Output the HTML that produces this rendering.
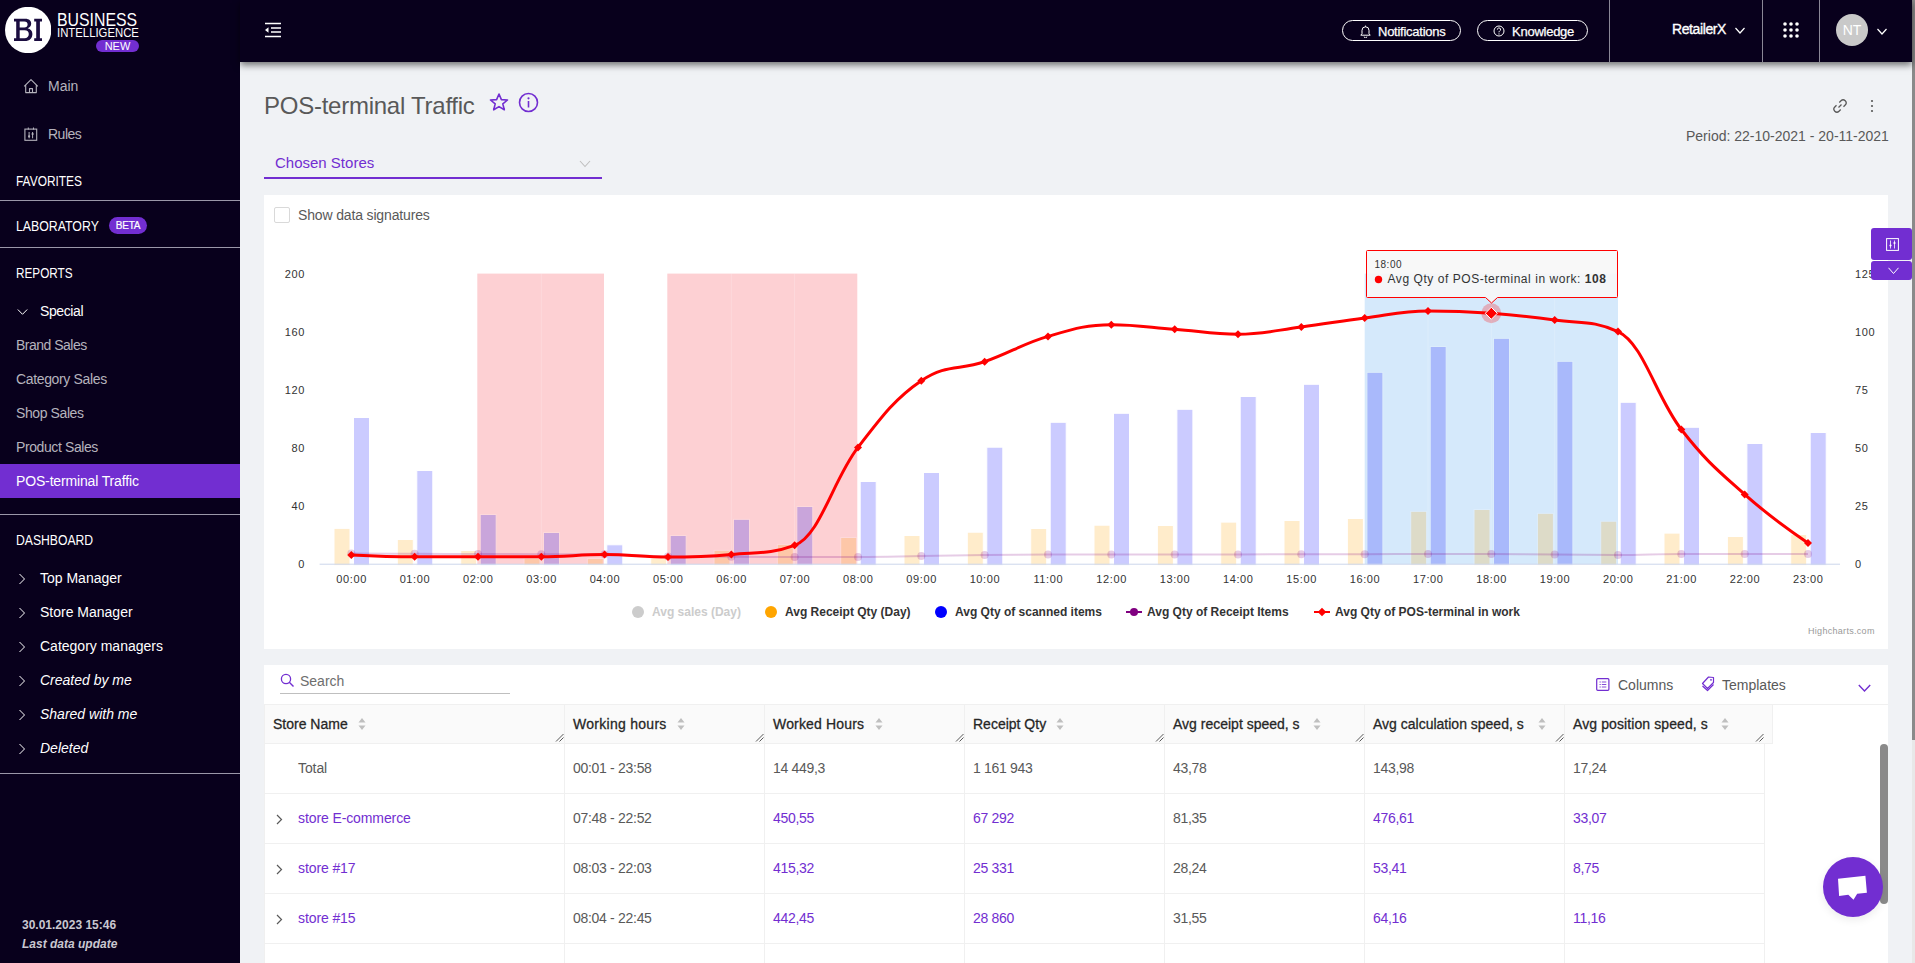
<!DOCTYPE html>
<html><head><meta charset="utf-8">
<style>
*{box-sizing:border-box;margin:0;padding:0}
html,body{width:1915px;height:963px;overflow:hidden;background:#f0f2f5;font-family:"Liberation Sans",sans-serif;color:#595959}
.abs{position:absolute}
#side{position:absolute;left:0;top:0;width:240px;height:963px;background:#08001c;color:#fff}
#hdr{position:absolute;left:240px;top:0;width:1672px;height:62px;background:#08001c;box-shadow:0 3px 7px rgba(0,0,0,0.55);z-index:5}
.sb{position:absolute;white-space:nowrap;font-size:14px;line-height:16px}
.sep{position:absolute;left:0;width:240px;height:1px;background:#9a97a8}
.pill{position:absolute;border:1px solid #fff;border-radius:11px;height:21px;top:20px;color:#fff;font-size:13px;line-height:19px;-webkit-text-stroke:0.25px #fff;letter-spacing:-0.25px}
.ax{font-family:"Liberation Sans",sans-serif;font-size:11px;fill:#333;letter-spacing:0.6px}
.tt1{font-family:"Liberation Sans",sans-serif;font-size:10px;fill:#333;letter-spacing:0.5px}
.tt2{font-family:"Liberation Sans",sans-serif;font-size:12px;fill:#333;letter-spacing:0.55px}
.card{position:absolute;background:#fff}
.lg{position:absolute;font-size:12px;font-weight:bold;color:#333;white-space:nowrap;line-height:14px}
.th{position:absolute;top:704px;height:40px;background:#fafafa;border-top:1px solid #f0f0f0;border-right:1px solid #f0f0f0;border-bottom:1px solid #f0f0f0;font-size:14px;color:#262626;line-height:39px;padding-left:8px;white-space:nowrap;-webkit-text-stroke:0.28px #262626}
.td{position:absolute;height:50px;border-right:1px solid #f0f0f0;border-bottom:1px solid #f0f0f0;font-size:14px;line-height:48px;padding-left:8px;white-space:nowrap;color:#595959;background:#fff}
.pu{color:#722ed1}
</style></head><body>
<!-- SIDEBAR -->
<div id="side">
  <svg class="abs" style="left:5px;top:7px" width="46" height="46" viewBox="0 0 46 46"><circle cx="23.2" cy="23" r="23.2" fill="#fff"/><path fill="#1b0d40" fill-rule="evenodd" d="M9 11.7 H20 C24.6 11.7 26.2 13.9 26.2 16.6 C26.2 19 24.8 20.6 22.6 21.3 C25.4 21.9 27.4 23.9 27.4 26.9 C27.4 30.6 24.9 34.1 19.6 34.1 H9 V31.3 H11.2 V14.5 H9 Z M14.7 14.5 H19.2 C21.6 14.5 22.6 15.7 22.6 17.5 C22.6 19.4 21.4 20.5 19.2 20.5 H14.7 Z M14.7 23.2 H19.6 C22.4 23.2 23.8 24.7 23.8 27.1 C23.8 29.7 22.2 31.3 19.5 31.3 H14.7 Z M29.2 11.7 H37 V14.5 H34.9 V31.3 H37 V34.1 H29.2 V31.3 H31.2 V14.5 H29.2 Z"/></svg>
  <div class="sb" style="left:57px;top:11px;font-size:18px;line-height:18px;color:#fff;transform:scaleX(0.88);transform-origin:0 0">BUSINESS</div>
  <div class="sb" style="left:57px;top:27px;font-size:12px;line-height:13px;color:#fff;transform:scaleX(0.945);transform-origin:0 0">INTELLIGENCE</div>
  <div class="abs" style="left:96px;top:40px;width:43px;height:12px;border-radius:6px;background:#722ed1;color:#fff;font-size:11px;line-height:12px;text-align:center">NEW</div>

  <svg class="abs" style="left:23px;top:78px" width="16" height="16" viewBox="0 0 16 16"><path d="M1.2 8.3 L8 1.6 L14.8 8.3 M2.7 6.9 V14.6 H13.3 V6.9 M6.5 14.6 V10.6 H9.5 V14.6" fill="none" stroke="#b5b3bd" stroke-width="1.1" stroke-linejoin="round"/></svg>
  <div class="sb" style="left:48px;top:78px;color:#b5b3bd">Main</div>
  <svg class="abs" style="left:24px;top:127px" width="14" height="14" viewBox="0 0 14 14"><rect x="0.9" y="2.1" width="11.8" height="11.2" fill="none" stroke="#b5b3bd" stroke-width="1.1"/><path d="M4.3 0.5 V2.6 M9.5 0.5 V2.6 M5.1 5 V11.3 M8.6 5 V11.3" stroke="#b5b3bd" stroke-width="1"/><circle cx="5.1" cy="9.3" r="1.1" fill="#b5b3bd"/><circle cx="8.6" cy="7" r="1.1" fill="#b5b3bd"/></svg>
  <div class="sb" style="left:48px;top:126px;color:#b5b3bd;letter-spacing:-0.5px">Rules</div>

  <div class="sb" style="left:16px;top:173px;color:#fff;transform:scaleX(0.851);transform-origin:0 0">FAVORITES</div>
  <div class="sep" style="top:200px"></div>
  <div class="sb" style="left:16px;top:218px;color:#fff;transform:scaleX(0.88);transform-origin:0 0">LABORATORY</div>
  <div class="abs" style="left:109px;top:217px;width:38px;height:17px;border-radius:9px;background:#722ed1;color:#fff;font-size:10px;line-height:18px;text-align:center;-webkit-text-stroke:0.2px #fff;letter-spacing:-0.2px">BETA</div>
  <div class="sep" style="top:247px"></div>
  <div class="sb" style="left:16px;top:265px;color:#fff;transform:scaleX(0.84);transform-origin:0 0">REPORTS</div>
  <svg class="abs" style="left:17px;top:308px" width="11" height="8" viewBox="0 0 11 8"><path d="M0.8 1.5 L5.5 6.3 L10.2 1.5" fill="none" stroke="#fff" stroke-width="1"/></svg>
  <div class="sb" style="left:40px;top:303px;color:#fff;letter-spacing:-0.4px">Special</div>
  <div class="sb" style="left:16px;top:337px;color:#b5b3bd;letter-spacing:-0.5px">Brand Sales</div>
  <div class="sb" style="left:16px;top:371px;color:#b5b3bd;letter-spacing:-0.35px">Category Sales</div>
  <div class="sb" style="left:16px;top:405px;color:#b5b3bd;letter-spacing:-0.4px">Shop Sales</div>
  <div class="sb" style="left:16px;top:439px;color:#b5b3bd;letter-spacing:-0.4px">Product Sales</div>
  <div class="abs" style="left:0;top:464px;width:240px;height:34px;background:#722ed1"></div>
  <div class="sb" style="left:16px;top:473px;color:#fff;letter-spacing:-0.15px">POS-terminal Traffic</div>
  <div class="sep" style="top:514px"></div>
  <div class="sb" style="left:16px;top:532px;color:#fff;transform:scaleX(0.87);transform-origin:0 0">DASHBOARD</div>
  <!-- dashboard items -->
  <svg class="abs" style="left:18px;top:573px" width="8" height="12" viewBox="0 0 8 12"><path d="M1.5 1 L6.5 6 L1.5 11" fill="none" stroke="#fff" stroke-width="1"/></svg>
<div class="sb" style="left:40px;top:570px;color:#fff;">Top Manager</div>
<svg class="abs" style="left:18px;top:607px" width="8" height="12" viewBox="0 0 8 12"><path d="M1.5 1 L6.5 6 L1.5 11" fill="none" stroke="#fff" stroke-width="1"/></svg>
<div class="sb" style="left:40px;top:604px;color:#fff;">Store Manager</div>
<svg class="abs" style="left:18px;top:641px" width="8" height="12" viewBox="0 0 8 12"><path d="M1.5 1 L6.5 6 L1.5 11" fill="none" stroke="#fff" stroke-width="1"/></svg>
<div class="sb" style="left:40px;top:638px;color:#fff;">Category managers</div>
<svg class="abs" style="left:18px;top:675px" width="8" height="12" viewBox="0 0 8 12"><path d="M1.5 1 L6.5 6 L1.5 11" fill="none" stroke="#fff" stroke-width="1"/></svg>
<div class="sb" style="left:40px;top:672px;color:#fff;font-style:italic;">Created by me</div>
<svg class="abs" style="left:18px;top:709px" width="8" height="12" viewBox="0 0 8 12"><path d="M1.5 1 L6.5 6 L1.5 11" fill="none" stroke="#fff" stroke-width="1"/></svg>
<div class="sb" style="left:40px;top:706px;color:#fff;font-style:italic;">Shared with me</div>
<svg class="abs" style="left:18px;top:743px" width="8" height="12" viewBox="0 0 8 12"><path d="M1.5 1 L6.5 6 L1.5 11" fill="none" stroke="#fff" stroke-width="1"/></svg>
<div class="sb" style="left:40px;top:740px;color:#fff;font-style:italic;">Deleted</div>
  <div class="sep" style="top:773px"></div>
  <div class="sb" style="left:22px;top:917px;font-size:12px;font-weight:bold;color:#c9c7d0">30.01.2023 15:46</div>
  <div class="sb" style="left:22px;top:936px;font-size:12px;font-weight:bold;font-style:italic;color:#c9c7d0">Last data update</div>
</div>

<!-- HEADER -->
<div id="hdr">
  <svg class="abs" style="left:25px;top:22px" width="17" height="16" viewBox="0 0 17 16"><path d="M0 1.5 H16 M6 6 H16 M6 10 H16 M0 14.5 H16" stroke="#fff" stroke-width="1.5"/><path d="M0 8 L3.5 5.2 V10.8 Z" fill="#fff"/></svg>
  <div class="pill" style="left:1102px;width:119px"><svg class="abs" style="left:16.5px;top:4px" width="11" height="13" viewBox="0 0 11 13"><path d="M0.8 10.2 H10.2 L9 8.7 V5.3 A3.5 3.5 0 0 0 2 5.3 V8.7 Z M4.2 11.6 A1.3 1.3 0 0 0 6.8 11.6 M5.5 0.6 V1.8" fill="none" stroke="#fff" stroke-width="1" stroke-linejoin="round"/></svg><span class="abs" style="left:35px;top:1px">Notifications</span></div>
  <div class="pill" style="left:1237px;width:111px"><svg class="abs" style="left:15px;top:3.5px" width="12" height="12" viewBox="0 0 12 12"><circle cx="6" cy="6" r="5" fill="none" stroke="#fff" stroke-width="1"/><path d="M4.4 4.6 A1.6 1.6 0 1 1 6.6 6 Q6 6.4 6 7.3" fill="none" stroke="#fff" stroke-width="1"/><circle cx="6" cy="8.9" r="0.6" fill="#fff"/></svg><span class="abs" style="left:34px;top:1px">Knowledge</span></div>
  <div class="abs" style="left:1369px;top:0;width:1px;height:62px;background:#8a8796"></div>
  <div class="abs" style="left:1432px;top:21px;color:#fff;font-size:14px;white-space:nowrap;-webkit-text-stroke:0.35px #fff;letter-spacing:-0.4px">RetailerX</div>
  <svg class="abs" style="left:1495px;top:27px" width="10" height="7" viewBox="0 0 10 7"><path d="M0.5 1 L5 6 L9.5 1" fill="none" stroke="#fff" stroke-width="1.2"/></svg>
  <div class="abs" style="left:1522px;top:0;width:1px;height:62px;background:#8a8796"></div>
  <svg class="abs" style="left:1543px;top:22px" width="16" height="16" viewBox="0 0 16 16"><g fill="#fff"><circle cx="2" cy="2" r="1.8"/><circle cx="8" cy="2" r="1.8"/><circle cx="14" cy="2" r="1.8"/><circle cx="2" cy="8" r="1.8"/><circle cx="8" cy="8" r="1.8"/><circle cx="14" cy="8" r="1.8"/><circle cx="2" cy="14" r="1.8"/><circle cx="8" cy="14" r="1.8"/><circle cx="14" cy="14" r="1.8"/></g></svg>
  <div class="abs" style="left:1579px;top:0;width:1px;height:62px;background:#8a8796"></div>
  <div class="abs" style="left:1596px;top:14px;width:32px;height:32px;border-radius:16px;background:#c9c9c9;color:#fff;font-size:14px;line-height:32px;text-align:center">NT</div>
  <svg class="abs" style="left:1637px;top:28px" width="10" height="7" viewBox="0 0 10 7"><path d="M0.5 1 L5 6 L9.5 1" fill="none" stroke="#fff" stroke-width="1.2"/></svg>
</div>
<!-- scrollbar -->
<div class="abs" style="left:1912px;top:0;width:3px;height:963px;background:#e8e8e8"></div>
<div class="abs" style="left:1912px;top:0;width:3px;height:740px;background:#8a8a8a"></div>

<!-- TITLE -->
<div class="abs" style="left:264px;top:92px;font-size:24px;line-height:28px;color:#595959;white-space:nowrap;letter-spacing:-0.25px">POS-terminal Traffic</div>
<svg class="abs" style="left:489px;top:93px" width="20" height="18" viewBox="0 0 20 18"><path d="M10 1 L12.4 6.6 L18.5 7 L13.8 10.9 L15.3 16.8 L10 13.6 L4.7 16.8 L6.2 10.9 L1.5 7 L7.6 6.6 Z" fill="none" stroke="#722ed1" stroke-width="1.6" stroke-linejoin="round"/></svg>
<svg class="abs" style="left:518px;top:92px" width="21" height="21" viewBox="0 0 21 21"><circle cx="10.5" cy="10.5" r="9" fill="none" stroke="#722ed1" stroke-width="1.6"/><path d="M10.5 9 V15.5" stroke="#722ed1" stroke-width="1.6"/><circle cx="10.5" cy="6.3" r="1.1" fill="#722ed1"/></svg>
<div class="abs" style="left:275px;top:154px;font-size:15px;line-height:18px;color:#722ed1;white-space:nowrap">Chosen Stores</div>
<svg class="abs" style="left:579px;top:160px" width="12" height="8" viewBox="0 0 12 8"><path d="M1 1 L6 6.5 L11 1" fill="none" stroke="#bfbfbf" stroke-width="1.1"/></svg>
<div class="abs" style="left:264px;top:177px;width:338px;height:2px;background:#722ed1"></div>
<!-- link + dots -->
<svg class="abs" style="left:1832px;top:98px" width="16" height="16" viewBox="0 0 16 16"><g fill="none" stroke="#595959" stroke-width="1.3"><path d="M6.5 9.5 L9.5 6.5"/><path d="M7.3 4.5 L9 2.8 A2.4 2.4 0 0 1 13.2 7 L11.5 8.7"/><path d="M8.7 11.5 L7 13.2 A2.4 2.4 0 0 1 2.8 9 L4.5 7.3"/></g></svg>
<svg class="abs" style="left:1869px;top:98px" width="6" height="16" viewBox="0 0 6 16"><g fill="#595959"><circle cx="3" cy="3" r="1.1"/><circle cx="3" cy="8" r="1.1"/><circle cx="3" cy="13" r="1.1"/></g></svg>
<div class="abs" style="left:1686px;top:128px;font-size:14px;line-height:16px;color:#595959;white-space:nowrap">Period: 22-10-2021 - 20-11-2021</div>

<!-- CHART CARD -->
<div class="card" style="left:264px;top:195px;width:1624px;height:454px">
  <div class="abs" style="left:10px;top:12px;width:16px;height:16px;border:1px solid #d9d9d9;border-radius:2px;background:#fff"></div>
  <div class="abs" style="left:34px;top:12px;font-size:14px;line-height:16px;color:#595959;white-space:nowrap;letter-spacing:-0.15px">Show data signatures</div>
  <svg class="chart" width="1624" height="453" viewBox="264 195 1624 453" style="position:absolute;left:0;top:0">
<rect x="477.3" y="273.6" width="126.7" height="290.6" fill="#fdd0d3"/>
<rect x="667.3" y="273.6" width="190.0" height="290.6" fill="#fdd0d3"/>
<rect x="1364.7" y="273.6" width="253.3" height="290.6" fill="#d5e9fb"/>
<rect x="540.8" y="273.6" width="1" height="290.6" fill="rgba(255,255,255,0.2)"/>
<rect x="730.8" y="273.6" width="1" height="290.6" fill="rgba(255,255,255,0.2)"/>
<rect x="794.1" y="273.6" width="1" height="290.6" fill="rgba(255,255,255,0.2)"/>
<rect x="1427.5" y="273.6" width="1" height="290.6" fill="rgba(255,255,255,0.2)"/>
<rect x="1490.8" y="273.6" width="1" height="290.6" fill="rgba(255,255,255,0.2)"/>
<rect x="1554.2" y="273.6" width="1" height="290.6" fill="rgba(255,255,255,0.2)"/>
<g opacity="0.2">
<rect x="334.0" y="528.4" width="16" height="36.8" fill="#ffa500" stroke="#fff" stroke-width="1"/>
<rect x="397.3" y="539.5" width="16" height="25.7" fill="#ffa500" stroke="#fff" stroke-width="1"/>
<rect x="460.7" y="550.5" width="16" height="14.7" fill="#ffa500" stroke="#fff" stroke-width="1"/>
<rect x="524.0" y="558.1" width="16" height="7.1" fill="#ffa500" stroke="#fff" stroke-width="1"/>
<rect x="587.3" y="558.5" width="16" height="6.7" fill="#ffa500" stroke="#fff" stroke-width="1"/>
<rect x="650.7" y="558.1" width="16" height="7.1" fill="#ffa500" stroke="#fff" stroke-width="1"/>
<rect x="714.0" y="550.3" width="16" height="14.9" fill="#ffa500" stroke="#fff" stroke-width="1"/>
<rect x="777.3" y="544.4" width="16" height="20.8" fill="#ffa500" stroke="#fff" stroke-width="1"/>
<rect x="840.7" y="537.5" width="16" height="27.7" fill="#ffa500" stroke="#fff" stroke-width="1"/>
<rect x="904.0" y="535.5" width="16" height="29.7" fill="#ffa500" stroke="#fff" stroke-width="1"/>
<rect x="967.3" y="532.2" width="16" height="33.0" fill="#ffa500" stroke="#fff" stroke-width="1"/>
<rect x="1030.7" y="528.5" width="16" height="36.7" fill="#ffa500" stroke="#fff" stroke-width="1"/>
<rect x="1094.0" y="525.2" width="16" height="40.0" fill="#ffa500" stroke="#fff" stroke-width="1"/>
<rect x="1157.4" y="525.5" width="16" height="39.7" fill="#ffa500" stroke="#fff" stroke-width="1"/>
<rect x="1220.7" y="522.1" width="16" height="43.1" fill="#ffa500" stroke="#fff" stroke-width="1"/>
<rect x="1284.0" y="520.5" width="16" height="44.7" fill="#ffa500" stroke="#fff" stroke-width="1"/>
<rect x="1347.4" y="518.5" width="16" height="46.7" fill="#ffa500" stroke="#fff" stroke-width="1"/>
<rect x="1410.7" y="511.3" width="16" height="53.9" fill="#ffa500" stroke="#fff" stroke-width="1"/>
<rect x="1474.0" y="509.5" width="16" height="55.7" fill="#ffa500" stroke="#fff" stroke-width="1"/>
<rect x="1537.4" y="513.3" width="16" height="51.9" fill="#ffa500" stroke="#fff" stroke-width="1"/>
<rect x="1600.7" y="521.2" width="16" height="44.0" fill="#ffa500" stroke="#fff" stroke-width="1"/>
<rect x="1664.0" y="533.1" width="16" height="32.1" fill="#ffa500" stroke="#fff" stroke-width="1"/>
<rect x="1727.4" y="536.5" width="16" height="28.7" fill="#ffa500" stroke="#fff" stroke-width="1"/>
<rect x="1790.7" y="534.5" width="16" height="30.7" fill="#ffa500" stroke="#fff" stroke-width="1"/>
</g><g opacity="0.2">
<rect x="353.5" y="417.5" width="16" height="147.7" fill="#0000ff" stroke="#fff" stroke-width="1"/>
<rect x="416.8" y="470.5" width="16" height="94.7" fill="#0000ff" stroke="#fff" stroke-width="1"/>
<rect x="480.2" y="514.5" width="16" height="50.7" fill="#0000ff" stroke="#fff" stroke-width="1"/>
<rect x="543.5" y="532.5" width="16" height="32.7" fill="#0000ff" stroke="#fff" stroke-width="1"/>
<rect x="606.8" y="544.8" width="16" height="20.4" fill="#0000ff" stroke="#fff" stroke-width="1"/>
<rect x="670.2" y="535.5" width="16" height="29.7" fill="#0000ff" stroke="#fff" stroke-width="1"/>
<rect x="733.5" y="519.3" width="16" height="45.9" fill="#0000ff" stroke="#fff" stroke-width="1"/>
<rect x="796.8" y="506.5" width="16" height="58.7" fill="#0000ff" stroke="#fff" stroke-width="1"/>
<rect x="860.2" y="481.5" width="16" height="83.7" fill="#0000ff" stroke="#fff" stroke-width="1"/>
<rect x="923.5" y="472.5" width="16" height="92.7" fill="#0000ff" stroke="#fff" stroke-width="1"/>
<rect x="986.8" y="447.2" width="16" height="118.0" fill="#0000ff" stroke="#fff" stroke-width="1"/>
<rect x="1050.2" y="422.3" width="16" height="142.9" fill="#0000ff" stroke="#fff" stroke-width="1"/>
<rect x="1113.5" y="413.3" width="16" height="151.9" fill="#0000ff" stroke="#fff" stroke-width="1"/>
<rect x="1176.9" y="409.3" width="16" height="155.9" fill="#0000ff" stroke="#fff" stroke-width="1"/>
<rect x="1240.2" y="396.5" width="16" height="168.7" fill="#0000ff" stroke="#fff" stroke-width="1"/>
<rect x="1303.5" y="384.3" width="16" height="180.9" fill="#0000ff" stroke="#fff" stroke-width="1"/>
<rect x="1366.9" y="372.3" width="16" height="192.9" fill="#0000ff" stroke="#fff" stroke-width="1"/>
<rect x="1430.2" y="346.5" width="16" height="218.7" fill="#0000ff" stroke="#fff" stroke-width="1"/>
<rect x="1493.5" y="338.3" width="16" height="226.9" fill="#0000ff" stroke="#fff" stroke-width="1"/>
<rect x="1556.9" y="361.3" width="16" height="203.9" fill="#0000ff" stroke="#fff" stroke-width="1"/>
<rect x="1620.2" y="402.3" width="16" height="162.9" fill="#0000ff" stroke="#fff" stroke-width="1"/>
<rect x="1683.5" y="427.3" width="16" height="137.9" fill="#0000ff" stroke="#fff" stroke-width="1"/>
<rect x="1746.9" y="443.5" width="16" height="121.7" fill="#0000ff" stroke="#fff" stroke-width="1"/>
<rect x="1810.2" y="432.5" width="16" height="132.7" fill="#0000ff" stroke="#fff" stroke-width="1"/>
</g>
<rect x="319.6" y="563.7" width="1520.4" height="1" fill="#ccd6eb"/>
<path d="M 351.30 553.40 C 351.30 553.40 389.30 553.68 414.63 553.80 C 439.97 553.92 452.64 553.92 477.97 554.00 C 503.30 554.08 515.97 554.14 541.30 554.20 C 566.64 554.26 579.31 554.20 604.64 554.30 C 629.97 554.40 642.64 556.00 667.97 556.40 C 693.31 556.80 705.97 556.70 731.31 556.80 C 756.64 556.90 769.31 556.90 794.64 556.90 C 819.98 556.90 832.64 556.90 857.98 556.90 C 883.31 556.90 895.98 556.38 921.31 556.00 C 946.65 555.62 959.31 555.28 984.65 555.00 C 1009.98 554.72 1022.65 554.60 1047.98 554.60 C 1073.32 554.60 1085.98 554.60 1111.32 554.60 C 1136.65 554.60 1149.32 554.54 1174.65 554.50 C 1199.99 554.46 1212.65 554.44 1237.99 554.40 C 1263.32 554.36 1275.99 554.34 1301.32 554.30 C 1326.66 554.26 1339.32 554.26 1364.66 554.20 C 1389.99 554.14 1402.66 554.00 1427.99 554.00 C 1453.33 554.00 1465.99 554.00 1491.33 554.00 C 1516.66 554.00 1529.33 554.30 1554.66 554.50 C 1579.99 554.70 1592.66 555.00 1618.00 555.00 C 1643.33 555.00 1656.00 554.00 1681.33 554.00 C 1706.66 554.00 1719.33 554.00 1744.67 554.00 C 1770.00 554.00 1808.00 554.00 1808.00 554.00" fill="none" stroke="rgba(128,0,128,0.2)" stroke-width="2"/>
<circle cx="351.3" cy="553.4" r="4" fill="rgba(128,0,128,0.2)"/>
<circle cx="414.6" cy="553.8" r="4" fill="rgba(128,0,128,0.2)"/>
<circle cx="478.0" cy="554.0" r="4" fill="rgba(128,0,128,0.2)"/>
<circle cx="541.3" cy="554.2" r="4" fill="rgba(128,0,128,0.2)"/>
<circle cx="604.6" cy="554.3" r="4" fill="rgba(128,0,128,0.2)"/>
<circle cx="668.0" cy="556.4" r="4" fill="rgba(128,0,128,0.2)"/>
<circle cx="731.3" cy="556.8" r="4" fill="rgba(128,0,128,0.2)"/>
<circle cx="794.6" cy="556.9" r="4" fill="rgba(128,0,128,0.2)"/>
<circle cx="858.0" cy="556.9" r="4" fill="rgba(128,0,128,0.2)"/>
<circle cx="921.3" cy="556.0" r="4" fill="rgba(128,0,128,0.2)"/>
<circle cx="984.6" cy="555.0" r="4" fill="rgba(128,0,128,0.2)"/>
<circle cx="1048.0" cy="554.6" r="4" fill="rgba(128,0,128,0.2)"/>
<circle cx="1111.3" cy="554.6" r="4" fill="rgba(128,0,128,0.2)"/>
<circle cx="1174.7" cy="554.5" r="4" fill="rgba(128,0,128,0.2)"/>
<circle cx="1238.0" cy="554.4" r="4" fill="rgba(128,0,128,0.2)"/>
<circle cx="1301.3" cy="554.3" r="4" fill="rgba(128,0,128,0.2)"/>
<circle cx="1364.7" cy="554.2" r="4" fill="rgba(128,0,128,0.2)"/>
<circle cx="1428.0" cy="554.0" r="4" fill="rgba(128,0,128,0.2)"/>
<circle cx="1491.3" cy="554.0" r="4" fill="rgba(128,0,128,0.2)"/>
<circle cx="1554.7" cy="554.5" r="4" fill="rgba(128,0,128,0.2)"/>
<circle cx="1618.0" cy="555.0" r="4" fill="rgba(128,0,128,0.2)"/>
<circle cx="1681.3" cy="554.0" r="4" fill="rgba(128,0,128,0.2)"/>
<circle cx="1744.7" cy="554.0" r="4" fill="rgba(128,0,128,0.2)"/>
<circle cx="1808.0" cy="554.0" r="4" fill="rgba(128,0,128,0.2)"/>
<path d="M 351.30 554.90 C 351.30 554.90 389.30 556.80 414.63 556.80 C 439.97 556.80 452.64 556.80 477.97 556.80 C 503.30 556.80 515.97 556.80 541.30 556.80 C 566.64 556.80 579.31 554.60 604.64 554.60 C 629.97 554.60 642.64 557.10 667.97 557.10 C 693.31 557.10 705.97 556.76 731.31 554.40 C 756.64 552.04 769.31 554.40 794.64 545.30 C 819.98 536.20 832.64 480.32 857.98 447.40 C 883.31 414.48 895.98 397.84 921.31 380.70 C 946.65 363.56 959.31 370.56 984.65 361.70 C 1009.98 352.84 1022.65 343.80 1047.98 336.40 C 1073.32 329.00 1085.98 324.70 1111.32 324.70 C 1136.65 324.70 1149.32 327.40 1174.65 329.30 C 1199.99 331.20 1212.65 334.20 1237.99 334.20 C 1263.32 334.20 1275.99 330.26 1301.32 327.00 C 1326.66 323.74 1339.32 321.10 1364.66 317.90 C 1389.99 314.70 1402.66 311.00 1427.99 311.00 C 1453.33 311.00 1465.99 311.50 1491.33 313.30 C 1516.66 315.10 1529.33 316.34 1554.66 320.00 C 1579.99 323.66 1592.66 320.00 1618.00 331.60 C 1643.33 343.20 1656.00 396.94 1681.33 429.50 C 1706.66 462.06 1719.33 471.72 1744.67 494.40 C 1770.00 517.08 1808.00 542.90 1808.00 542.90" fill="none" stroke="#ff0000" stroke-width="3" stroke-linejoin="round" stroke-linecap="round"/>
<path d="M 351.3 550.9 L 355.3 554.9 L 351.3 558.9 L 347.3 554.9 Z" fill="#ff0000"/>
<path d="M 414.6 552.8 L 418.6 556.8 L 414.6 560.8 L 410.6 556.8 Z" fill="#ff0000"/>
<path d="M 478.0 552.8 L 482.0 556.8 L 478.0 560.8 L 474.0 556.8 Z" fill="#ff0000"/>
<path d="M 541.3 552.8 L 545.3 556.8 L 541.3 560.8 L 537.3 556.8 Z" fill="#ff0000"/>
<path d="M 604.6 550.6 L 608.6 554.6 L 604.6 558.6 L 600.6 554.6 Z" fill="#ff0000"/>
<path d="M 668.0 553.1 L 672.0 557.1 L 668.0 561.1 L 664.0 557.1 Z" fill="#ff0000"/>
<path d="M 731.3 550.4 L 735.3 554.4 L 731.3 558.4 L 727.3 554.4 Z" fill="#ff0000"/>
<path d="M 794.6 541.3 L 798.6 545.3 L 794.6 549.3 L 790.6 545.3 Z" fill="#ff0000"/>
<path d="M 858.0 443.4 L 862.0 447.4 L 858.0 451.4 L 854.0 447.4 Z" fill="#ff0000"/>
<path d="M 921.3 376.7 L 925.3 380.7 L 921.3 384.7 L 917.3 380.7 Z" fill="#ff0000"/>
<path d="M 984.6 357.7 L 988.6 361.7 L 984.6 365.7 L 980.6 361.7 Z" fill="#ff0000"/>
<path d="M 1048.0 332.4 L 1052.0 336.4 L 1048.0 340.4 L 1044.0 336.4 Z" fill="#ff0000"/>
<path d="M 1111.3 320.7 L 1115.3 324.7 L 1111.3 328.7 L 1107.3 324.7 Z" fill="#ff0000"/>
<path d="M 1174.7 325.3 L 1178.7 329.3 L 1174.7 333.3 L 1170.7 329.3 Z" fill="#ff0000"/>
<path d="M 1238.0 330.2 L 1242.0 334.2 L 1238.0 338.2 L 1234.0 334.2 Z" fill="#ff0000"/>
<path d="M 1301.3 323.0 L 1305.3 327.0 L 1301.3 331.0 L 1297.3 327.0 Z" fill="#ff0000"/>
<path d="M 1364.7 313.9 L 1368.7 317.9 L 1364.7 321.9 L 1360.7 317.9 Z" fill="#ff0000"/>
<path d="M 1428.0 307.0 L 1432.0 311.0 L 1428.0 315.0 L 1424.0 311.0 Z" fill="#ff0000"/>
<path d="M 1554.7 316.0 L 1558.7 320.0 L 1554.7 324.0 L 1550.7 320.0 Z" fill="#ff0000"/>
<path d="M 1618.0 327.6 L 1622.0 331.6 L 1618.0 335.6 L 1614.0 331.6 Z" fill="#ff0000"/>
<path d="M 1681.3 425.5 L 1685.3 429.5 L 1681.3 433.5 L 1677.3 429.5 Z" fill="#ff0000"/>
<path d="M 1744.7 490.4 L 1748.7 494.4 L 1744.7 498.4 L 1740.7 494.4 Z" fill="#ff0000"/>
<path d="M 1808.0 538.9 L 1812.0 542.9 L 1808.0 546.9 L 1804.0 542.9 Z" fill="#ff0000"/>
<circle cx="1491.3" cy="313.3" r="10" fill="rgba(255,0,0,0.25)"/>
<path d="M 1491.3 307.3 L 1497.3 313.3 L 1491.3 319.3 L 1485.3 313.3 Z" fill="#ff0000" stroke="#ffffff" stroke-width="1"/>
<text x="305" y="568.2" text-anchor="end" class="ax">0</text>
<text x="305" y="510.1" text-anchor="end" class="ax">40</text>
<text x="305" y="452.0" text-anchor="end" class="ax">80</text>
<text x="305" y="393.8" text-anchor="end" class="ax">120</text>
<text x="305" y="335.7" text-anchor="end" class="ax">160</text>
<text x="305" y="277.6" text-anchor="end" class="ax">200</text>
<text x="1855" y="568.2" text-anchor="start" class="ax">0</text>
<text x="1855" y="510.1" text-anchor="start" class="ax">25</text>
<text x="1855" y="452.0" text-anchor="start" class="ax">50</text>
<text x="1855" y="393.8" text-anchor="start" class="ax">75</text>
<text x="1855" y="335.7" text-anchor="start" class="ax">100</text>
<text x="1855" y="277.6" text-anchor="start" class="ax">125</text>
<text x="351.6" y="583" text-anchor="middle" class="ax">00:00</text>
<text x="414.9" y="583" text-anchor="middle" class="ax">01:00</text>
<text x="478.3" y="583" text-anchor="middle" class="ax">02:00</text>
<text x="541.6" y="583" text-anchor="middle" class="ax">03:00</text>
<text x="604.9" y="583" text-anchor="middle" class="ax">04:00</text>
<text x="668.3" y="583" text-anchor="middle" class="ax">05:00</text>
<text x="731.6" y="583" text-anchor="middle" class="ax">06:00</text>
<text x="794.9" y="583" text-anchor="middle" class="ax">07:00</text>
<text x="858.3" y="583" text-anchor="middle" class="ax">08:00</text>
<text x="921.6" y="583" text-anchor="middle" class="ax">09:00</text>
<text x="984.9" y="583" text-anchor="middle" class="ax">10:00</text>
<text x="1048.3" y="583" text-anchor="middle" class="ax">11:00</text>
<text x="1111.6" y="583" text-anchor="middle" class="ax">12:00</text>
<text x="1175.0" y="583" text-anchor="middle" class="ax">13:00</text>
<text x="1238.3" y="583" text-anchor="middle" class="ax">14:00</text>
<text x="1301.6" y="583" text-anchor="middle" class="ax">15:00</text>
<text x="1365.0" y="583" text-anchor="middle" class="ax">16:00</text>
<text x="1428.3" y="583" text-anchor="middle" class="ax">17:00</text>
<text x="1491.6" y="583" text-anchor="middle" class="ax">18:00</text>
<text x="1555.0" y="583" text-anchor="middle" class="ax">19:00</text>
<text x="1618.3" y="583" text-anchor="middle" class="ax">20:00</text>
<text x="1681.6" y="583" text-anchor="middle" class="ax">21:00</text>
<text x="1745.0" y="583" text-anchor="middle" class="ax">22:00</text>
<text x="1808.3" y="583" text-anchor="middle" class="ax">23:00</text>
<path d="M 1367.5 250.5 L 1616.5 250.5 Q 1617.5 250.5 1617.5 251.5 L 1617.5 296.5 Q 1617.5 297.5 1616.5 297.5 L 1497.5 297.5 L 1491.5 303 L 1485.5 297.5 L 1367.5 297.5 Q 1366.5 297.5 1366.5 296.5 L 1366.5 251.5 Q 1366.5 250.5 1367.5 250.5 Z" fill="rgba(247,247,247,0.9)" stroke="#ff0000" stroke-width="1"/>
<text x="1374.5" y="268" class="tt1">18:00</text>
<circle cx="1378.5" cy="279.5" r="3.7" fill="#ff0000"/>
<text x="1387.5" y="283" class="tt2">Avg Qty of POS-terminal in work: <tspan font-weight="bold">108</tspan></text>
</svg>
  <div class="abs" style="left:368px;top:411px;width:12px;height:12px;border-radius:6px;background:#cccccc"></div>
<div class="lg" style="left:388px;top:410px;color:#cccccc">Avg sales (Day)</div>
<div class="abs" style="left:501px;top:411px;width:12px;height:12px;border-radius:6px;background:#ffa500"></div>
<div class="lg" style="left:521px;top:410px;color:#333333">Avg Receipt Qty (Day)</div>
<div class="abs" style="left:671px;top:411px;width:12px;height:12px;border-radius:6px;background:#0000ff"></div>
<div class="lg" style="left:691px;top:410px;color:#333333">Avg Qty of scanned items</div>
<div class="abs" style="left:862px;top:416px;width:16px;height:2px;background:#800080"></div>
<div class="abs" style="left:866px;top:413px;width:8px;height:8px;border-radius:4px;background:#800080"></div>
<div class="lg" style="left:883px;top:410px;color:#333333">Avg Qty of Receipt Items</div>
<div class="abs" style="left:1050px;top:416px;width:16px;height:2px;background:#ff0000"></div>
<div class="abs" style="left:1054px;top:413px;width:8px;height:8px;transform:rotate(45deg) scale(0.75);background:#ff0000"></div>
<div class="lg" style="left:1071px;top:410px;color:#333333">Avg Qty of POS-terminal in work</div>
  <div class="abs" style="left:1544px;top:431px;font-size:9px;letter-spacing:0.3px;color:#999;white-space:nowrap">Highcharts.com</div>
</div>
<!-- side buttons -->
<div class="abs" style="left:1871px;top:228px;width:41px;height:31.5px;background:#722ed1;border-radius:3px"></div>
<svg class="abs" style="left:1885.5px;top:237.5px" width="13" height="13" viewBox="0 0 13 13"><rect x="0.6" y="0.6" width="11.8" height="11.8" fill="none" stroke="#fff" stroke-width="1"/><path d="M4.5 2.5 V10.5 M8.5 2.5 V10.5" stroke="#fff" stroke-width="0.8"/><circle cx="4.5" cy="7.5" r="1.1" fill="#fff"/><circle cx="8.5" cy="5" r="1.1" fill="#fff"/></svg>
<div class="abs" style="left:1871px;top:261px;width:41px;height:19px;background:#722ed1;border-radius:3px"></div>
<svg class="abs" style="left:1887.5px;top:267px" width="11" height="8" viewBox="0 0 11 8"><path d="M0.5 0.8 L5.5 6.5 L10.5 0.8" fill="none" stroke="#fff" stroke-width="1"/></svg>

<!-- <div class="abs" style="left:264px;top:704px;width:1624px;height:1px;background:#f0f0f0"></div>
<div class="th" style="left:264px;width:301px;border-left:1px solid #f0f0f0;letter-spacing:0px">Store Name</div>
<svg class="abs" style="left:358px;top:717px" width="8" height="14" viewBox="0 0 8 14"><path d="M4 1 L7.5 5.5 H0.5 Z M4 13 L7.5 8.5 H0.5 Z" fill="#bfbfbf"/></svg>
<svg class="abs" style="left:555px;top:733px" width="9" height="9" viewBox="0 0 9 9"><path d="M1 8.5 L8.5 1 M4.5 8.5 L8.5 4.5" stroke="#595959" stroke-width="1"/></svg>
<div class="th" style="left:565px;width:200px;letter-spacing:0.28px">Working hours</div>
<svg class="abs" style="left:677px;top:717px" width="8" height="14" viewBox="0 0 8 14"><path d="M4 1 L7.5 5.5 H0.5 Z M4 13 L7.5 8.5 H0.5 Z" fill="#bfbfbf"/></svg>
<svg class="abs" style="left:755px;top:733px" width="9" height="9" viewBox="0 0 9 9"><path d="M1 8.5 L8.5 1 M4.5 8.5 L8.5 4.5" stroke="#595959" stroke-width="1"/></svg>
<div class="th" style="left:765px;width:200px;letter-spacing:0.17px">Worked Hours</div>
<svg class="abs" style="left:875px;top:717px" width="8" height="14" viewBox="0 0 8 14"><path d="M4 1 L7.5 5.5 H0.5 Z M4 13 L7.5 8.5 H0.5 Z" fill="#bfbfbf"/></svg>
<svg class="abs" style="left:955px;top:733px" width="9" height="9" viewBox="0 0 9 9"><path d="M1 8.5 L8.5 1 M4.5 8.5 L8.5 4.5" stroke="#595959" stroke-width="1"/></svg>
<div class="th" style="left:965px;width:200px;letter-spacing:0px">Receipt Qty</div>
<svg class="abs" style="left:1056px;top:717px" width="8" height="14" viewBox="0 0 8 14"><path d="M4 1 L7.5 5.5 H0.5 Z M4 13 L7.5 8.5 H0.5 Z" fill="#bfbfbf"/></svg>
<svg class="abs" style="left:1155px;top:733px" width="9" height="9" viewBox="0 0 9 9"><path d="M1 8.5 L8.5 1 M4.5 8.5 L8.5 4.5" stroke="#595959" stroke-width="1"/></svg>
<div class="th" style="left:1165px;width:200px;letter-spacing:0px">Avg receipt speed, s</div>
<svg class="abs" style="left:1313px;top:717px" width="8" height="14" viewBox="0 0 8 14"><path d="M4 1 L7.5 5.5 H0.5 Z M4 13 L7.5 8.5 H0.5 Z" fill="#bfbfbf"/></svg>
<svg class="abs" style="left:1355px;top:733px" width="9" height="9" viewBox="0 0 9 9"><path d="M1 8.5 L8.5 1 M4.5 8.5 L8.5 4.5" stroke="#595959" stroke-width="1"/></svg>
<div class="th" style="left:1365px;width:200px;letter-spacing:0px">Avg calculation speed, s</div>
<svg class="abs" style="left:1538px;top:717px" width="8" height="14" viewBox="0 0 8 14"><path d="M4 1 L7.5 5.5 H0.5 Z M4 13 L7.5 8.5 H0.5 Z" fill="#bfbfbf"/></svg>
<svg class="abs" style="left:1555px;top:733px" width="9" height="9" viewBox="0 0 9 9"><path d="M1 8.5 L8.5 1 M4.5 8.5 L8.5 4.5" stroke="#595959" stroke-width="1"/></svg>
<div class="th" style="left:1565px;width:208px;letter-spacing:0.1px">Avg position speed, s</div>
<svg class="abs" style="left:1721px;top:717px" width="8" height="14" viewBox="0 0 8 14"><path d="M4 1 L7.5 5.5 H0.5 Z M4 13 L7.5 8.5 H0.5 Z" fill="#bfbfbf"/></svg>
<svg class="abs" style="left:1755px;top:733px" width="9" height="9" viewBox="0 0 9 9"><path d="M1 8.5 L8.5 1 M4.5 8.5 L8.5 4.5" stroke="#595959" stroke-width="1"/></svg>
<div class="td" style="left:264px;top:744px;width:301px;padding-left:33px;border-left:1px solid #f0f0f0;letter-spacing:-0.1px">Total</div>
<div class="td" style="left:565px;top:744px;width:200px;padding-left:8px;letter-spacing:-0.3px">00:01 - 23:58</div>
<div class="td" style="left:765px;top:744px;width:200px;padding-left:8px;letter-spacing:-0.3px">14 449,3</div>
<div class="td" style="left:965px;top:744px;width:200px;padding-left:8px;letter-spacing:-0.3px">1 161 943</div>
<div class="td" style="left:1165px;top:744px;width:200px;padding-left:8px;letter-spacing:-0.3px">43,78</div>
<div class="td" style="left:1365px;top:744px;width:200px;padding-left:8px;letter-spacing:-0.3px">143,98</div>
<div class="td" style="left:1565px;top:744px;width:200px;padding-left:8px;letter-spacing:-0.3px">17,24</div>
<div class="td pu" style="left:264px;top:794px;width:301px;padding-left:33px;border-left:1px solid #f0f0f0;letter-spacing:-0.1px">store E-commerce</div>
<svg class="abs" style="left:276px;top:814px" width="7" height="11" viewBox="0 0 7 11"><path d="M1 1 L5.5 5.5 L1 10" fill="none" stroke="#595959" stroke-width="1.2"/></svg>
<div class="td" style="left:565px;top:794px;width:200px;padding-left:8px;letter-spacing:-0.3px">07:48 - 22:52</div>
<div class="td pu" style="left:765px;top:794px;width:200px;padding-left:8px;letter-spacing:-0.3px">450,55</div>
<div class="td pu" style="left:965px;top:794px;width:200px;padding-left:8px;letter-spacing:-0.3px">67 292</div>
<div class="td" style="left:1165px;top:794px;width:200px;padding-left:8px;letter-spacing:-0.3px">81,35</div>
<div class="td pu" style="left:1365px;top:794px;width:200px;padding-left:8px;letter-spacing:-0.3px">476,61</div>
<div class="td pu" style="left:1565px;top:794px;width:200px;padding-left:8px;letter-spacing:-0.3px">33,07</div>
<div class="td pu" style="left:264px;top:844px;width:301px;padding-left:33px;border-left:1px solid #f0f0f0;letter-spacing:-0.1px">store #17</div>
<svg class="abs" style="left:276px;top:864px" width="7" height="11" viewBox="0 0 7 11"><path d="M1 1 L5.5 5.5 L1 10" fill="none" stroke="#595959" stroke-width="1.2"/></svg>
<div class="td" style="left:565px;top:844px;width:200px;padding-left:8px;letter-spacing:-0.3px">08:03 - 22:03</div>
<div class="td pu" style="left:765px;top:844px;width:200px;padding-left:8px;letter-spacing:-0.3px">415,32</div>
<div class="td pu" style="left:965px;top:844px;width:200px;padding-left:8px;letter-spacing:-0.3px">25 331</div>
<div class="td" style="left:1165px;top:844px;width:200px;padding-left:8px;letter-spacing:-0.3px">28,24</div>
<div class="td pu" style="left:1365px;top:844px;width:200px;padding-left:8px;letter-spacing:-0.3px">53,41</div>
<div class="td pu" style="left:1565px;top:844px;width:200px;padding-left:8px;letter-spacing:-0.3px">8,75</div>
<div class="td pu" style="left:264px;top:894px;width:301px;padding-left:33px;border-left:1px solid #f0f0f0;letter-spacing:-0.1px">store #15</div>
<svg class="abs" style="left:276px;top:914px" width="7" height="11" viewBox="0 0 7 11"><path d="M1 1 L5.5 5.5 L1 10" fill="none" stroke="#595959" stroke-width="1.2"/></svg>
<div class="td" style="left:565px;top:894px;width:200px;padding-left:8px;letter-spacing:-0.3px">08:04 - 22:45</div>
<div class="td pu" style="left:765px;top:894px;width:200px;padding-left:8px;letter-spacing:-0.3px">442,45</div>
<div class="td pu" style="left:965px;top:894px;width:200px;padding-left:8px;letter-spacing:-0.3px">28 860</div>
<div class="td" style="left:1165px;top:894px;width:200px;padding-left:8px;letter-spacing:-0.3px">31,55</div>
<div class="td pu" style="left:1365px;top:894px;width:200px;padding-left:8px;letter-spacing:-0.3px">64,16</div>
<div class="td pu" style="left:1565px;top:894px;width:200px;padding-left:8px;letter-spacing:-0.3px">11,16</div>
<div class="td pu" style="left:264px;top:944px;width:301px;padding-left:33px;border-left:1px solid #f0f0f0;letter-spacing:-0.1px"></div>
<div class="td" style="left:565px;top:944px;width:200px;padding-left:8px;letter-spacing:-0.3px"></div>
<div class="td pu" style="left:765px;top:944px;width:200px;padding-left:8px;letter-spacing:-0.3px"></div>
<div class="td pu" style="left:965px;top:944px;width:200px;padding-left:8px;letter-spacing:-0.3px"></div>
<div class="td" style="left:1165px;top:944px;width:200px;padding-left:8px;letter-spacing:-0.3px"></div>
<div class="td pu" style="left:1365px;top:944px;width:200px;padding-left:8px;letter-spacing:-0.3px"></div>
<div class="td pu" style="left:1565px;top:944px;width:200px;padding-left:8px;letter-spacing:-0.3px"></div> CARD -->
<div class="card" style="left:264px;top:665px;width:1624px;height:298px"></div>
<svg class="abs" style="left:280px;top:673px" width="15" height="15" viewBox="0 0 15 15"><circle cx="6" cy="6" r="4.6" fill="none" stroke="#722ed1" stroke-width="1.3"/><path d="M9.3 9.3 L13.5 13.5" stroke="#722ed1" stroke-width="1.4"/></svg>
<div class="abs" style="left:300px;top:673px;font-size:14px;line-height:16px;color:#6e6e6e;white-space:nowrap">Search</div>
<div class="abs" style="left:280px;top:693px;width:230px;height:1px;background:#bfbfbf"></div>
<svg class="abs" style="left:1596px;top:677.5px" width="14" height="13" viewBox="0 0 14 13"><rect x="0.7" y="0.7" width="12.2" height="11.6" rx="1" fill="none" stroke="#722ed1" stroke-width="1.2"/><path d="M3.5 4 H4.8 M5.8 4 H10.3 M3.5 6.5 H4.8 M5.8 6.5 H10.3 M3.5 9 H4.8 M5.8 9 H10.3" stroke="#722ed1" stroke-width="1" opacity="0.85"/></svg>
<div class="abs" style="left:1618px;top:677px;font-size:14px;line-height:16px;color:#595959;white-space:nowrap">Columns</div>
<svg class="abs" style="left:1701px;top:676px" width="14" height="16" viewBox="0 0 14 16"><path d="M1.5 7.5 L7.5 1 L12.5 1.5 L12.5 6.5 L6.5 12.5 Z" fill="none" stroke="#722ed1" stroke-width="1.2" stroke-linejoin="round"/><path d="M1.5 10 L6.5 14.5 L12.5 8.5" fill="none" stroke="#722ed1" stroke-width="1.2" stroke-linejoin="round"/><circle cx="10" cy="3.8" r="0.9" fill="#722ed1"/></svg>
<div class="abs" style="left:1722px;top:677px;font-size:14px;line-height:16px;color:#595959;white-space:nowrap">Templates</div>
<svg class="abs" style="left:1857.5px;top:684px" width="13" height="8" viewBox="0 0 13 8"><path d="M0.8 1 L6.5 7 L12.2 1" fill="none" stroke="#722ed1" stroke-width="1.4"/></svg>
<div class="abs" style="left:264px;top:704px;width:1624px;height:1px;background:#f0f0f0"></div>
<div class="th" style="left:264px;width:301px;border-left:1px solid #f0f0f0;letter-spacing:0px">Store Name</div>
<svg class="abs" style="left:358px;top:717px" width="8" height="14" viewBox="0 0 8 14"><path d="M4 1 L7.5 5.5 H0.5 Z M4 13 L7.5 8.5 H0.5 Z" fill="#bfbfbf"/></svg>
<svg class="abs" style="left:555px;top:733px" width="9" height="9" viewBox="0 0 9 9"><path d="M1 8.5 L8.5 1 M4.5 8.5 L8.5 4.5" stroke="#595959" stroke-width="1"/></svg>
<div class="th" style="left:565px;width:200px;letter-spacing:0.28px">Working hours</div>
<svg class="abs" style="left:677px;top:717px" width="8" height="14" viewBox="0 0 8 14"><path d="M4 1 L7.5 5.5 H0.5 Z M4 13 L7.5 8.5 H0.5 Z" fill="#bfbfbf"/></svg>
<svg class="abs" style="left:755px;top:733px" width="9" height="9" viewBox="0 0 9 9"><path d="M1 8.5 L8.5 1 M4.5 8.5 L8.5 4.5" stroke="#595959" stroke-width="1"/></svg>
<div class="th" style="left:765px;width:200px;letter-spacing:0.17px">Worked Hours</div>
<svg class="abs" style="left:875px;top:717px" width="8" height="14" viewBox="0 0 8 14"><path d="M4 1 L7.5 5.5 H0.5 Z M4 13 L7.5 8.5 H0.5 Z" fill="#bfbfbf"/></svg>
<svg class="abs" style="left:955px;top:733px" width="9" height="9" viewBox="0 0 9 9"><path d="M1 8.5 L8.5 1 M4.5 8.5 L8.5 4.5" stroke="#595959" stroke-width="1"/></svg>
<div class="th" style="left:965px;width:200px;letter-spacing:0px">Receipt Qty</div>
<svg class="abs" style="left:1056px;top:717px" width="8" height="14" viewBox="0 0 8 14"><path d="M4 1 L7.5 5.5 H0.5 Z M4 13 L7.5 8.5 H0.5 Z" fill="#bfbfbf"/></svg>
<svg class="abs" style="left:1155px;top:733px" width="9" height="9" viewBox="0 0 9 9"><path d="M1 8.5 L8.5 1 M4.5 8.5 L8.5 4.5" stroke="#595959" stroke-width="1"/></svg>
<div class="th" style="left:1165px;width:200px;letter-spacing:0px">Avg receipt speed, s</div>
<svg class="abs" style="left:1313px;top:717px" width="8" height="14" viewBox="0 0 8 14"><path d="M4 1 L7.5 5.5 H0.5 Z M4 13 L7.5 8.5 H0.5 Z" fill="#bfbfbf"/></svg>
<svg class="abs" style="left:1355px;top:733px" width="9" height="9" viewBox="0 0 9 9"><path d="M1 8.5 L8.5 1 M4.5 8.5 L8.5 4.5" stroke="#595959" stroke-width="1"/></svg>
<div class="th" style="left:1365px;width:200px;letter-spacing:0px">Avg calculation speed, s</div>
<svg class="abs" style="left:1538px;top:717px" width="8" height="14" viewBox="0 0 8 14"><path d="M4 1 L7.5 5.5 H0.5 Z M4 13 L7.5 8.5 H0.5 Z" fill="#bfbfbf"/></svg>
<svg class="abs" style="left:1555px;top:733px" width="9" height="9" viewBox="0 0 9 9"><path d="M1 8.5 L8.5 1 M4.5 8.5 L8.5 4.5" stroke="#595959" stroke-width="1"/></svg>
<div class="th" style="left:1565px;width:208px;letter-spacing:0.1px">Avg position speed, s</div>
<svg class="abs" style="left:1721px;top:717px" width="8" height="14" viewBox="0 0 8 14"><path d="M4 1 L7.5 5.5 H0.5 Z M4 13 L7.5 8.5 H0.5 Z" fill="#bfbfbf"/></svg>
<svg class="abs" style="left:1755px;top:733px" width="9" height="9" viewBox="0 0 9 9"><path d="M1 8.5 L8.5 1 M4.5 8.5 L8.5 4.5" stroke="#595959" stroke-width="1"/></svg>
<div class="td" style="left:264px;top:744px;width:301px;padding-left:33px;border-left:1px solid #f0f0f0;letter-spacing:-0.1px">Total</div>
<div class="td" style="left:565px;top:744px;width:200px;padding-left:8px;letter-spacing:-0.3px">00:01 - 23:58</div>
<div class="td" style="left:765px;top:744px;width:200px;padding-left:8px;letter-spacing:-0.3px">14 449,3</div>
<div class="td" style="left:965px;top:744px;width:200px;padding-left:8px;letter-spacing:-0.3px">1 161 943</div>
<div class="td" style="left:1165px;top:744px;width:200px;padding-left:8px;letter-spacing:-0.3px">43,78</div>
<div class="td" style="left:1365px;top:744px;width:200px;padding-left:8px;letter-spacing:-0.3px">143,98</div>
<div class="td" style="left:1565px;top:744px;width:200px;padding-left:8px;letter-spacing:-0.3px">17,24</div>
<div class="td pu" style="left:264px;top:794px;width:301px;padding-left:33px;border-left:1px solid #f0f0f0;letter-spacing:-0.1px">store E-commerce</div>
<svg class="abs" style="left:276px;top:814px" width="7" height="11" viewBox="0 0 7 11"><path d="M1 1 L5.5 5.5 L1 10" fill="none" stroke="#595959" stroke-width="1.2"/></svg>
<div class="td" style="left:565px;top:794px;width:200px;padding-left:8px;letter-spacing:-0.3px">07:48 - 22:52</div>
<div class="td pu" style="left:765px;top:794px;width:200px;padding-left:8px;letter-spacing:-0.3px">450,55</div>
<div class="td pu" style="left:965px;top:794px;width:200px;padding-left:8px;letter-spacing:-0.3px">67 292</div>
<div class="td" style="left:1165px;top:794px;width:200px;padding-left:8px;letter-spacing:-0.3px">81,35</div>
<div class="td pu" style="left:1365px;top:794px;width:200px;padding-left:8px;letter-spacing:-0.3px">476,61</div>
<div class="td pu" style="left:1565px;top:794px;width:200px;padding-left:8px;letter-spacing:-0.3px">33,07</div>
<div class="td pu" style="left:264px;top:844px;width:301px;padding-left:33px;border-left:1px solid #f0f0f0;letter-spacing:-0.1px">store #17</div>
<svg class="abs" style="left:276px;top:864px" width="7" height="11" viewBox="0 0 7 11"><path d="M1 1 L5.5 5.5 L1 10" fill="none" stroke="#595959" stroke-width="1.2"/></svg>
<div class="td" style="left:565px;top:844px;width:200px;padding-left:8px;letter-spacing:-0.3px">08:03 - 22:03</div>
<div class="td pu" style="left:765px;top:844px;width:200px;padding-left:8px;letter-spacing:-0.3px">415,32</div>
<div class="td pu" style="left:965px;top:844px;width:200px;padding-left:8px;letter-spacing:-0.3px">25 331</div>
<div class="td" style="left:1165px;top:844px;width:200px;padding-left:8px;letter-spacing:-0.3px">28,24</div>
<div class="td pu" style="left:1365px;top:844px;width:200px;padding-left:8px;letter-spacing:-0.3px">53,41</div>
<div class="td pu" style="left:1565px;top:844px;width:200px;padding-left:8px;letter-spacing:-0.3px">8,75</div>
<div class="td pu" style="left:264px;top:894px;width:301px;padding-left:33px;border-left:1px solid #f0f0f0;letter-spacing:-0.1px">store #15</div>
<svg class="abs" style="left:276px;top:914px" width="7" height="11" viewBox="0 0 7 11"><path d="M1 1 L5.5 5.5 L1 10" fill="none" stroke="#595959" stroke-width="1.2"/></svg>
<div class="td" style="left:565px;top:894px;width:200px;padding-left:8px;letter-spacing:-0.3px">08:04 - 22:45</div>
<div class="td pu" style="left:765px;top:894px;width:200px;padding-left:8px;letter-spacing:-0.3px">442,45</div>
<div class="td pu" style="left:965px;top:894px;width:200px;padding-left:8px;letter-spacing:-0.3px">28 860</div>
<div class="td" style="left:1165px;top:894px;width:200px;padding-left:8px;letter-spacing:-0.3px">31,55</div>
<div class="td pu" style="left:1365px;top:894px;width:200px;padding-left:8px;letter-spacing:-0.3px">64,16</div>
<div class="td pu" style="left:1565px;top:894px;width:200px;padding-left:8px;letter-spacing:-0.3px">11,16</div>
<div class="td pu" style="left:264px;top:944px;width:301px;padding-left:33px;border-left:1px solid #f0f0f0;letter-spacing:-0.1px"></div>
<div class="td" style="left:565px;top:944px;width:200px;padding-left:8px;letter-spacing:-0.3px"></div>
<div class="td pu" style="left:765px;top:944px;width:200px;padding-left:8px;letter-spacing:-0.3px"></div>
<div class="td pu" style="left:965px;top:944px;width:200px;padding-left:8px;letter-spacing:-0.3px"></div>
<div class="td" style="left:1165px;top:944px;width:200px;padding-left:8px;letter-spacing:-0.3px"></div>
<div class="td pu" style="left:1365px;top:944px;width:200px;padding-left:8px;letter-spacing:-0.3px"></div>
<div class="td pu" style="left:1565px;top:944px;width:200px;padding-left:8px;letter-spacing:-0.3px"></div>
<!-- inner scrollbar -->
<div class="abs" style="left:1880px;top:744px;width:8px;height:160px;border-radius:4px;background:#8a8a8a"></div>
<!-- chat bubble -->
<div class="abs" style="left:1823px;top:857px;width:60px;height:60px;border-radius:30px;background:#722ed1;box-shadow:0 3px 8px rgba(0,0,0,0.08)"></div>
<svg class="abs" style="left:1836px;top:874px" width="32" height="28" viewBox="0 0 32 28"><path d="M2 4.7 L29.4 1.7 L30.9 18.8 L21.2 19.8 L17.5 25.8 L12.3 20.8 L3.1 22 Z" fill="#fff"/></svg>
</body></html>
